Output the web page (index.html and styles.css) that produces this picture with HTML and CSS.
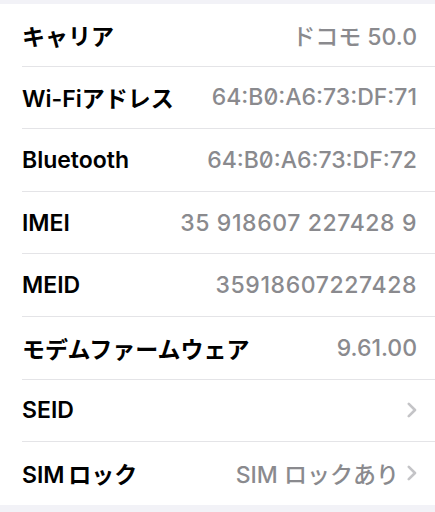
FILE: index.html
```html
<!DOCTYPE html>
<html lang="ja">
<head>
    <meta charset="UTF-8">
    <meta name="viewport" content="width=device-width, initial-scale=1.0">
    <title>情報</title>
    <link rel="stylesheet" href="styles.css">
</head>
<body>
    <div class="list">
        <div class="row">
            <span class="label">キャリア</span>
            <span class="value">ドコモ 50.0</span>
        </div>
        <div class="row">
            <span class="label">Wi-Fiアドレス</span>
            <span class="value mac">64:B0:A6:73:DF:71</span>
        </div>
        <div class="row">
            <span class="label">Bluetooth</span>
            <span class="value mac">64:B0:A6:73:DF:72</span>
        </div>
        <div class="row">
            <span class="label">IMEI</span>
            <span class="value num">35 918607 227428 9</span>
        </div>
        <div class="row">
            <span class="label">MEID</span>
            <span class="value num">35918607227428</span>
        </div>
        <div class="row">
            <span class="label">モデムファームウェア</span>
            <span class="value">9.61.00</span>
        </div>
        <div class="row">
            <span class="label">SEID</span>
            <span class="value">
                <svg class="chevron" width="10" height="16" viewBox="0 0 10 16"><path d="M1.8 1.8 L8 8 L1.8 14.2" /></svg>
            </span>
        </div>
        <div class="row">
            <span class="label">SIM&#8201;ロック</span>
            <span class="value">SIM ロックあり
                <svg class="chevron" width="10" height="16" viewBox="0 0 10 16"><path d="M1.8 1.8 L8 8 L1.8 14.2" /></svg>
            </span>
        </div>
    </div>
</body>
</html>
```

FILE: styles.css
```css
body {
    margin: 0;
    background-color: #f2f2f7;
    font-family: Inter, "Noto Sans CJK JP", sans-serif;
    font-size: 23px;
}

.list {
    background-color: #fff;
    margin-top: 4px;
    margin-bottom: 7px;
}

.row {
    display: flex;
    align-items: center;
    justify-content: space-between;
    height: 62.6px;
    box-sizing: border-box;
    margin-left: 22px;
    padding-right: 18px;
    border-bottom: 1px solid #e4e4e7;
}

.row:last-child {
    border-bottom: none;
}

.label {
    color: #000;
    font-weight: 600;
}

.value {
    color: #8a8a8e;
    font-weight: 500;
    display: flex;
    align-items: center;
    gap: 8px;
}

.mac {
    font-feature-settings: "zero" 1;
}

.num {
    letter-spacing: 0.6px;
}

.chevron path {
    fill: none;
    stroke: #c4c4c7;
    stroke-width: 2.6;
    stroke-linecap: round;
    stroke-linejoin: round;
}
```
